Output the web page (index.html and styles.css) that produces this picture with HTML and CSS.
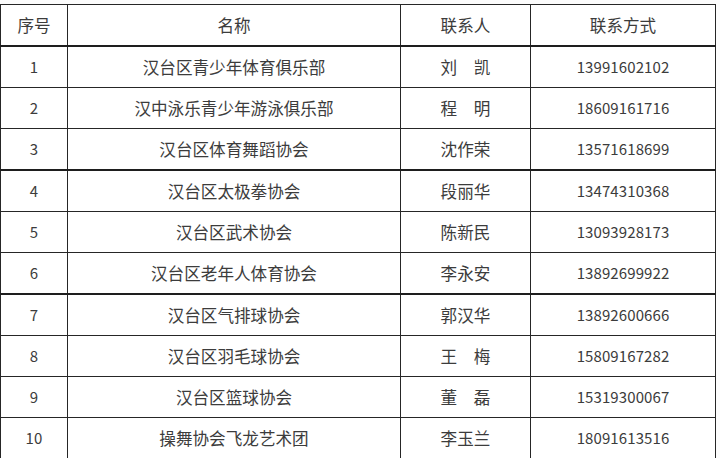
FILE: index.html
```html
<!DOCTYPE html>
<html lang="zh-CN">
<head>
<meta charset="utf-8">
<title>汉台区体育社会组织联系表</title>
<link rel="stylesheet" href="styles.css">
</head>
<body>
<table class="orgs">
  <colgroup>
    <col class="c-no"><col class="c-name"><col class="c-person"><col class="c-phone">
  </colgroup>
  <thead>
    <tr><th>序号</th><th>名称</th><th>联系人</th><th>联系方式</th></tr>
  </thead>
  <tbody>
    <tr class="thick"><td class="num">1</td><td>汉台区青少年体育俱乐部</td><td>刘　凯</td><td class="num">13991602102</td></tr>
    <tr><td class="num">2</td><td>汉中泳乐青少年游泳俱乐部</td><td>程　明</td><td class="num">18609161716</td></tr>
    <tr><td class="num">3</td><td>汉台区体育舞蹈协会</td><td>沈作荣</td><td class="num">13571618699</td></tr>
    <tr class="thick"><td class="num">4</td><td>汉台区太极拳协会</td><td>段丽华</td><td class="num">13474310368</td></tr>
    <tr><td class="num">5</td><td>汉台区武术协会</td><td>陈新民</td><td class="num">13093928173</td></tr>
    <tr><td class="num">6</td><td>汉台区老年人体育协会</td><td>李永安</td><td class="num">13892699922</td></tr>
    <tr class="thick"><td class="num">7</td><td>汉台区气排球协会</td><td>郭汉华</td><td class="num">13892600666</td></tr>
    <tr><td class="num">8</td><td>汉台区羽毛球协会</td><td>王　梅</td><td class="num">15809167282</td></tr>
    <tr><td class="num">9</td><td>汉台区篮球协会</td><td>董　磊</td><td class="num">15319300067</td></tr>
    <tr><td class="num">10</td><td>操舞协会飞龙艺术团</td><td>李玉兰</td><td class="num">18091613516</td></tr>
  </tbody>
</table>
<div class="strip"></div>
</body>
</html>
```

FILE: styles.css
```css
html, body {
  margin: 0;
  padding: 0;
  background: #fcfcfc;
}
body {
  padding-top: 4px;
  font-family: "Noto Sans CJK SC", "Noto Sans", sans-serif;
  color: #3c3c3c;
}
.orgs {
  border-collapse: collapse;
  table-layout: fixed;
  width: 715px;
  background: #fff;
}
.c-no { width: 67px; }
.c-name { width: 333px; }
.c-person { width: 130px; }
.c-phone { width: 185px; }
.orgs th, .orgs td {
  border: 1px solid #262626;
  height: 40px;
  padding: 0;
  text-align: center;
  vertical-align: middle;
  font-size: 16.6px;
  font-weight: 400;
  line-height: 20px;
  white-space: nowrap;
}
.orgs tr.thick td {
  border-top: 2px solid #1e1e1e;
}
.orgs td.num {
  font-size: 15px;
  letter-spacing: 0.1px;
}
.strip {
  height: 2px;
  width: 716px;
  background: #e4e7df;
}
```
